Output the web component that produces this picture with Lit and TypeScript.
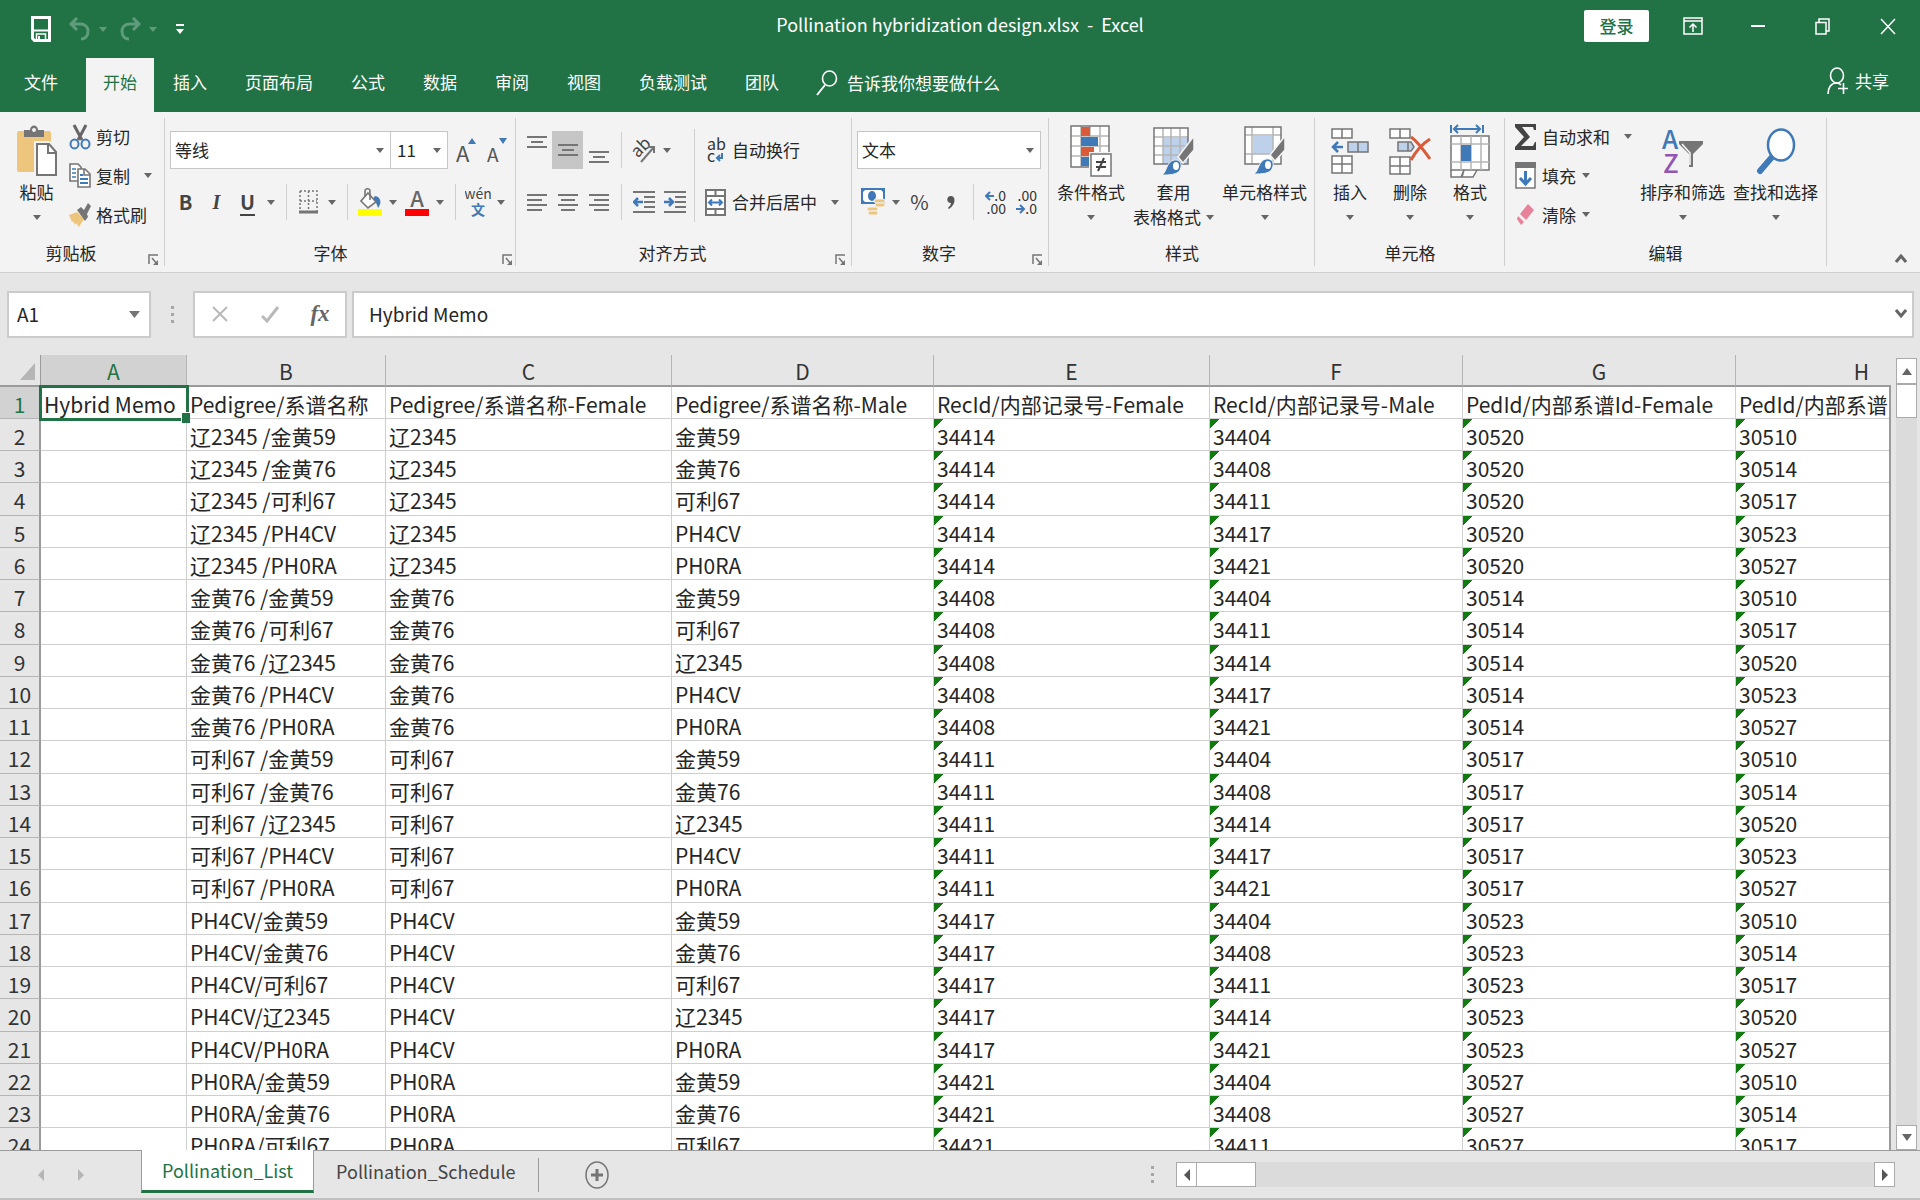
import { LitElement, html, svg, css, TemplateResult } from "lit";
import { customElement, state } from "lit/decorators.js";
import { classMap } from "lit/directives/class-map.js";

interface Line {
  name: string;
  rec: string;
  ped: string;
}

const LINES: Record<string, Line> = {
  h59: { name: "金黄59", rec: "34404", ped: "30510" },
  h76: { name: "金黄76", rec: "34408", ped: "30514" },
  k67: { name: "可利67", rec: "34411", ped: "30517" },
  l2345: { name: "辽2345", rec: "34414", ped: "30520" },
  ph4: { name: "PH4CV", rec: "34417", ped: "30523" },
  ph0: { name: "PH0RA", rec: "34421", ped: "30527" },
};

const CROSSES: [string, string[]][] = [
  ["l2345", ["h59", "h76", "k67", "ph4", "ph0"]],
  ["h76", ["h59", "k67", "l2345", "ph4", "ph0"]],
  ["k67", ["h59", "h76", "l2345", "ph4", "ph0"]],
  ["ph4", ["h59", "h76", "k67", "l2345", "ph0"]],
  ["ph0", ["h59", "h76", "k67"]],
];

const HEADINGS = [
  "Hybrid Memo",
  "Pedigree/系谱名称",
  "Pedigree/系谱名称-Female",
  "Pedigree/系谱名称-Male",
  "RecId/内部记录号-Female",
  "RecId/内部记录号-Male",
  "PedId/内部系谱Id-Female",
  "PedId/内部系谱Id-Male",
];

const ROWS: string[][] = [
  HEADINGS,
  ...CROSSES.flatMap(([f, males]) =>
    males.map((m) => {
      const a = LINES[f];
      const b = LINES[m];
      const gap = a.name.startsWith("PH") ? "" : " ";
      return ["", `${a.name}${gap}/${b.name}`, a.name, b.name, a.rec, b.rec, a.ped, b.ped];
    })
  ),
];

const COLUMNS = ["A", "B", "C", "D", "E", "F", "G", "H"];
const TABS = ["插入", "页面布局", "公式", "数据", "审阅", "视图", "负载测试", "团队"];

const caret = html`<svg class="caret" width="8" height="5" viewBox="0 0 8 5"><path d="M0 0h8L4 5z" fill="currentColor" /></svg>`;

const hlines = (rows: [number, number][], step: number) => html`
  <svg width="20" height=${step * (rows.length - 1) + 2}>
    ${rows.map(([x, len], i) => svg`<rect x=${x} y=${i * step} width=${len} height="2" fill="#757575" />`)}
  </svg>
`;

const icons = {
  save: html`<svg width="20" height="26" viewBox="0 0 20 26" fill="none" stroke="#fff">
    <path d="M1.500 1.500h17v23h-15l-2-2z" stroke-width="3" /><path d="M1.500 14.500h17" stroke-width="2" /><path d="M5.500 24v-6h9v6" stroke-width="1.500" /><path d="M8 20v4" stroke-width="2" />
  </svg>`,
  undo: html`<svg width="22" height="24" viewBox="0 0 22 24" fill="none" stroke="currentColor" stroke-width="3">
    <path d="M8 1L2 7l6 6M2 7h9c5 0 8 3 8 7 0 5-3 8-7 8" />
  </svg>`,
  redo: html`<svg width="22" height="24" viewBox="0 0 22 24" fill="none" stroke="currentColor" stroke-width="3">
    <path d="M14 1l6 6-6 6M20 7h-9c-5 0-8 3-8 7 0 5 3 8 7 8" />
  </svg>`,
  customize: html`<svg width="8" height="11" viewBox="0 0 8 11" fill="#fff"><path d="M0 0h8v2H0zM0 5h8l-4 5z" /></svg>`,
  display: html`<svg width="20" height="18" viewBox="0 0 20 18" fill="none" stroke="#fff" stroke-width="1.500">
    <path d="M1 1h18v16H1zM1 4h18M10 15V7M6.500 10.500L10 7l3.500 3.500" />
  </svg>`,
  minimize: html`<svg width="14" height="2" viewBox="0 0 14 2"><path d="M0 0h14v2H0z" fill="#fff" /></svg>`,
  restore: html`<svg width="15" height="17" viewBox="0 0 15 17" fill="none" stroke="#fff" stroke-width="1.500">
    <path d="M1 4.500h10v11.500H1zM4 4.500V1h10v12h-3" />
  </svg>`,
  close: html`<svg width="16" height="17" viewBox="0 0 16 17" stroke="#fff" stroke-width="1.500"><path d="M1 1l14 15M15 1L1 16" /></svg>`,
  search: html`<svg width="22" height="26" viewBox="0 0 22 26" fill="none" stroke="#fff" stroke-width="1.600">
    <ellipse cx="13.500" cy="8.500" rx="7" ry="7.500" /><path d="M9 15L1 25" stroke-width="2" />
  </svg>`,
  person: html`<svg width="22" height="28" viewBox="0 0 22 28" fill="none" stroke="#fff" stroke-width="1.600">
    <ellipse cx="10" cy="8.500" rx="6.500" ry="7.500" /><path d="M1 27c0-6 3-11 8-11 2 0 4 .5 5 2M16.500 16v11M11 21.500h10" />
  </svg>`,
  paste: html`<svg width="42" height="52" viewBox="0 0 42 52">
    <rect x="1" y="6" width="34" height="41" rx="2" fill="#eec57c" />
    <path d="M8 5h6c0-6 8-6 8 0h6v7H8z" fill="#757575" /><circle cx="18" cy="5" r="2" fill="#f3f3f3" />
    <path d="M20 18h13l8 9v24H20z" fill="#fff" stroke="#f3f3f3" stroke-width="4" />
    <path d="M21 19h12l7 8v23H21z" fill="#fff" stroke="#757575" stroke-width="2" /><path d="M32 19v9h8" fill="none" stroke="#757575" stroke-width="2" />
  </svg>`,
  cut: html`<svg width="22" height="26" viewBox="0 0 22 26" fill="none">
    <path d="M5 1l8 15M17 1L9 16" stroke="#666" stroke-width="3" />
    <ellipse cx="5.500" cy="20" rx="4" ry="4.500" stroke="#3f79b7" stroke-width="2" /><ellipse cx="16.500" cy="20" rx="4" ry="4.500" stroke="#3f79b7" stroke-width="2" />
  </svg>`,
  copy: html`<svg width="22" height="25" viewBox="0 0 22 25" stroke="#757575" stroke-width="1.600">
    <path d="M1 1h8l3 3v14H1z" fill="#fff" /><path d="M3 6h4M3 10h4M3 14h4" stroke="#3f79b7" />
    <path d="M9 6h7l5 5v13H9z" fill="#fff" /><path d="M15 6v6h6" fill="none" /><path d="M11 12h3M11 16h8M11 20h8" stroke="#3f79b7" stroke-width="2" />
  </svg>`,
  brush: html`<svg width="22" height="24" viewBox="0 0 22 24">
    <path d="M0 12l8-3 7 7-5 8-3-4-1 2-2-4-1 1z" fill="#eec57c" /><path d="M8 7l4-3 3 3 4-7 3 3-4 8 1 3-3 4z" fill="#757575" />
  </svg>`,
  grow: html`<svg width="22" height="28" viewBox="0 0 22 28"><text x="0" y="26" font-size="22" fill="#555">A</text><path d="M12 8h8l-4-6z" fill="#3f79b7" /></svg>`,
  shrink: html`<svg width="22" height="28" viewBox="0 0 22 28"><text x="0" y="26" font-size="19" fill="#555">A</text><path d="M12 2h8l-4 6z" fill="#3f79b7" /></svg>`,
  border: html`<svg width="19" height="24" viewBox="0 0 19 24" fill="none" stroke="#757575" stroke-width="1.500">
    <path d="M1 1h17v20M1 1v20M9.500 1v20M1 11h17" stroke-dasharray="2 2" /><path d="M0 22h19" stroke-width="3" />
  </svg>`,
  fill: html`<svg width="24" height="28" viewBox="0 0 24 28">
    <path d="M17 8c6 1 7 7 3 12-1-4-2-6-6-8z" fill="#3f79b7" />
    <path d="M10 5l8 9-8 6-7-7z" fill="#fff" stroke="#757575" stroke-width="1.600" /><path d="M7 8V3c0-3 5-3 5 0v9" fill="none" stroke="#757575" stroke-width="1.600" />
    <path d="M0 21h24v7H0z" fill="#ff0" />
  </svg>`,
  color: html`<svg width="24" height="28" viewBox="0 0 24 28"><text x="12" y="19" font-size="22" font-weight="500" text-anchor="middle" fill="#666">A</text><path d="M0 21h24v7H0z" fill="#f00" /></svg>`,
  wen: html`<svg width="26" height="30" viewBox="0 0 26 30">
    <text x="13" y="12" font-size="14" text-anchor="middle" fill="#444">wén</text><text x="13" y="28" font-size="14" font-weight="700" text-anchor="middle" fill="#3f79b7">文</text>
  </svg>`,
  orient: html`<svg width="26" height="26" viewBox="0 0 26 26">
    <text x="4" y="21" font-size="17" fill="#444" transform="rotate(-45 6 18)">ab</text><path d="M10 25L23 10M17 10h6v6" fill="none" stroke="#757575" stroke-width="2" />
  </svg>`,
  outdent: html`<svg width="22" height="23" viewBox="0 0 22 23"><path d="M0 0h22v2H0zM11 5h11v2H11zM11 10h11v2H11zM11 15h11v2H11zM0 20h22v2H0z" fill="#757575" /><path d="M10 11H2M5 7l-4 4 4 4" stroke="#3f79b7" stroke-width="2.500" fill="none" /></svg>`,
  indent: html`<svg width="22" height="23" viewBox="0 0 22 23"><path d="M0 0h22v2H0zM11 5h11v2H11zM11 10h11v2H11zM11 15h11v2H11zM0 20h22v2H0z" fill="#757575" /><path d="M0 11h8M5 7l4 4-4 4" stroke="#3f79b7" stroke-width="2.500" fill="none" /></svg>`,
  wrap: html`<svg width="20" height="28" viewBox="0 0 20 28"><text x="1" y="14" font-size="16" fill="#333">ab</text><text x="1" y="26" font-size="16" fill="#333">c</text><path d="M16 17v5h-4M14 19l-3 3 3 3" fill="none" stroke="#3f79b7" stroke-width="2" /></svg>`,
  merge: html`<svg width="21" height="27" viewBox="0 0 21 27" fill="#fff" stroke="#757575" stroke-width="2">
    <path d="M1 1h19v25H1zM1 7h19M1 20h19M10.500 1v6M10.500 20v6" /><path d="M4 13.500h13M7 10.500l-3 3 3 3M14 10.500l3 3-3 3" fill="none" stroke="#3f79b7" />
  </svg>`,
  currency: html`<svg width="24" height="29" viewBox="0 0 24 29">
    <rect x="1" y="1" width="22" height="14" fill="#fff" stroke="#3f79b7" stroke-width="2" /><ellipse cx="11" cy="8" rx="4" ry="5" fill="#3f79b7" /><path d="M1 1h4L1 5zM23 1h-4l4 4zM1 15h4l-4-4z" fill="#3f79b7" />
    <g fill="#eec57c" stroke="#f3f3f3"><rect x="13" y="11" width="11" height="4" rx="2" /><rect x="14" y="15" width="10" height="4" rx="2" /><rect x="6" y="19" width="11" height="4" rx="2" /><rect x="7" y="23" width="10" height="4" rx="2" /></g>
  </svg>`,
  comma: html`<svg width="8" height="13" viewBox="0 0 8 13"><path d="M4 0c5 0 5 9-2 13L1 12c2-2 3-4 3-5C-1 7-1 0 4 0z" fill="#555" /></svg>`,
  incDec: html`<svg width="22" height="26" viewBox="0 0 22 26"><text x="21" y="12" font-size="14" text-anchor="end" fill="#333">.0</text><text x="21" y="25" font-size="14" text-anchor="end" fill="#333">.00</text><path d="M9 7H2M5 3L1 7l4 4" fill="none" stroke="#3f79b7" stroke-width="2" /></svg>`,
  decDec: html`<svg width="22" height="26" viewBox="0 0 22 26"><text x="21" y="12" font-size="14" text-anchor="end" fill="#333">.00</text><text x="21" y="25" font-size="14" text-anchor="end" fill="#333">.0</text><path d="M0 20h7M4 16l4 4-4 4" fill="none" stroke="#3f79b7" stroke-width="2" /></svg>`,
  conditional: html`<svg width="42" height="52" viewBox="0 0 42 52">
    <rect x="1" y="1" width="38" height="41" fill="#fff" /><path d="M11 1v41M20 1v41M30 1v41M1 11h38M1 21h38M1 31h38" stroke="#b5b5b5" stroke-width="1.500" />
    <rect x="1" y="1" width="38" height="41" fill="none" stroke="#757575" stroke-width="1.500" />
    <path d="M11 2h9v9h-9zM11 22h13v9H11z" fill="#d95b3a" /><path d="M11 12h17v9H11zM11 32h9v9h-9z" fill="#3f79b7" />
    <rect x="19" y="27" width="24" height="25" fill="#f3f3f3" /><rect x="21" y="29" width="20" height="22" fill="#fff" stroke="#757575" stroke-width="1.500" />
    <path d="M26 37h10M26 42h10M34 33l-6 13" stroke="#444" stroke-width="2" />
  </svg>`,
  tableStyle: html`<svg width="42" height="50" viewBox="0 0 42 50">
    <rect x="1" y="2" width="34" height="36" fill="#fff" /><path d="M10 12h25v26H10z" fill="#bdd2ea" />
    <path d="M10 2v36M18 2v36M27 2v36M1 11h34M1 20h34M1 29h34" stroke="#b5b5b5" stroke-width="1.500" /><rect x="1" y="2" width="34" height="36" fill="none" stroke="#757575" stroke-width="1.500" />
    <path d="M41 10v14L30 37l-5-6z" fill="#757575" stroke="#f3f3f3" stroke-width="1.500" /><path d="M9 49c5-3 4-13 12-15 6-1 9 4 6 10-3 5-11 5-18 5z" fill="#3f79b7" stroke="#f3f3f3" /><ellipse cx="23" cy="40" rx="3" ry="4" fill="#fff" />
  </svg>`,
  cellStyle: html`<svg width="42" height="50" viewBox="0 0 42 50">
    <rect x="1" y="1" width="36" height="37" fill="#fff" /><path d="M9 10h20v18H9z" fill="#bdd2ea" />
    <path d="M8 1v37M29 1v37M1 9h36M1 28h36" stroke="#b5b5b5" stroke-width="1.500" /><rect x="1" y="1" width="36" height="37" fill="none" stroke="#757575" stroke-width="1.500" />
    <path d="M41 10v14L31 35l-5-6z" fill="#757575" stroke="#f3f3f3" stroke-width="1.500" /><path d="M10 48c5-3 4-13 12-15 6-1 9 4 6 10-3 5-11 5-18 5z" fill="#3f79b7" stroke="#f3f3f3" /><ellipse cx="24" cy="39" rx="3" ry="4" fill="#fff" />
  </svg>`,
  insert: html`<svg width="38" height="50" viewBox="0 0 38 50" fill="#fff" stroke="#757575" stroke-width="1.500">
    <path d="M1 3h20v9H1zM11 3v9M1 30h20v17H1zM11 30v17M1 38h20" /><path d="M17 16h20v10H17zM27 16v10" fill="#bdd2ea" /><path d="M12 21H3M7 16l-5 5 5 5" fill="none" stroke="#3f79b7" stroke-width="2.500" />
  </svg>`,
  remove: html`<svg width="42" height="50" viewBox="0 0 42 50" fill="#fff" stroke="#757575" stroke-width="1.500">
    <path d="M1 3h20v9H1zM11 3v9M1 31h20v17H1zM11 31v17M1 40h20" /><path d="M9 16h13l3 5-3 4H9zM19 16v9" fill="#bdd2ea" /><path d="M22 11c6 4 12 12 19 22M41 13C33 18 27 25 22 34" fill="none" stroke="#d95b3a" stroke-width="3" />
  </svg>`,
  format: html`<svg width="40" height="54" viewBox="0 0 40 54" fill="#fff" stroke="#757575" stroke-width="1.500">
    <path d="M1 1v8M33 1v8M4 5h26M8 1L4 5l4 4M26 1l4 4-4 4" fill="none" stroke="#3f79b7" stroke-width="2" />
    <path d="M1 46v7h10l3-7M14 46l-2 7h11l4-7" /><rect x="1" y="12" width="38" height="34" />
    <path d="M11 12v34M21 12v34M31 12v34M1 20h38M1 38h38" stroke="#b5b5b5" /><rect x="11" y="21" width="10" height="16" fill="#3f79b7" stroke="none" />
  </svg>`,
  sum: html`<svg width="21" height="26" viewBox="0 0 21 26"><path d="M0 0h21v6h-2l-1-3H7l8 10-9 9h12l2-4h1v8H0v-3l9-10L0 3z" fill="#444" /></svg>`,
  down: html`<svg width="21" height="27" viewBox="0 0 21 27"><path d="M1 1h19v25H1z" fill="#fff" stroke="#757575" stroke-width="1.500" /><path d="M0 0h21v6H0z" fill="#757575" /><path d="M10.500 9v13M5 16l5.500 6 5.500-6" fill="none" stroke="#3f79b7" stroke-width="3" /></svg>`,
  clear: html`<svg width="21" height="22" viewBox="0 0 21 22"><path d="M13 0l6 6-8 10-6-6z" fill="#e8829a" /><path d="M3 12l6 6-3 3-4-6z" fill="#e8829a" /></svg>`,
  sort: html`<svg width="42" height="48" viewBox="0 0 42 48">
    <text x="8" y="22" font-size="26" font-weight="500" text-anchor="middle" fill="#3f79b7">A</text><text x="9" y="46" font-size="26" font-weight="500" text-anchor="middle" fill="#9156b4">Z</text>
    <path d="M17 14h24v3L31 27v13h-4V27L17 17z" fill="#757575" /><path d="M20 17l8 9v12" fill="none" stroke="#fff" stroke-width="1.500" />
  </svg>`,
  find: html`<svg width="40" height="48" viewBox="0 0 40 48"><path d="M16 30L4 44" stroke="#3f79b7" stroke-width="6" stroke-linecap="round" /><ellipse cx="25" cy="18" rx="13" ry="15.500" fill="#fff" stroke="#3f79b7" stroke-width="2.500" /></svg>`,
  launcher: html`<svg width="11" height="12" viewBox="0 0 11 12" fill="none" stroke="#757575" stroke-width="1.500"><path d="M1 10V1h9M4 4l5 6" /><path d="M10 6v5H5z" fill="#757575" stroke="none" /></svg>`,
  collapse: html`<svg width="12" height="10" viewBox="0 0 12 10" fill="none" stroke="#666" stroke-width="3"><path d="M1 9l5-6 5 6" /></svg>`,
  expand: html`<svg width="12" height="10" viewBox="0 0 12 10" fill="none" stroke="#666" stroke-width="3"><path d="M1 1l5 6 5-6" /></svg>`,
  cancel: html`<svg width="16" height="16" viewBox="0 0 16 16" stroke="#b9b9b9" stroke-width="2"><path d="M1 1l14 14M15 1L1 15" /></svg>`,
  accept: html`<svg width="18" height="17" viewBox="0 0 18 17" fill="none" stroke="#b9b9b9" stroke-width="3"><path d="M1 10l5 5L17 1" /></svg>`,
  dots: html`<svg width="3" height="17" viewBox="0 0 3 17" fill="#a6a6a6"><path d="M0 0h3v3H0zM0 7h3v3H0zM0 14h3v3H0z" /></svg>`,
  left: html`<svg width="6" height="12" viewBox="0 0 6 12"><path d="M6 0v12L0 6z" fill="currentColor" /></svg>`,
  right: html`<svg width="6" height="12" viewBox="0 0 6 12"><path d="M0 0v12l6-6z" fill="currentColor" /></svg>`,
  up: html`<svg width="10" height="7" viewBox="0 0 10 7"><path d="M0 7h10L5 0z" fill="currentColor" /></svg>`,
  lower: html`<svg width="10" height="7" viewBox="0 0 10 7"><path d="M0 0h10L5 7z" fill="currentColor" /></svg>`,
  add: html`<svg width="24" height="28" viewBox="0 0 24 28" fill="none" stroke="#757575"><ellipse cx="12" cy="14" rx="11" ry="13" stroke-width="1.500" /><path d="M12 8v12M6 14h12" stroke-width="3" /></svg>`,
};

@customElement("app-root")
export class AppRoot extends LitElement {
  @state() private sheet = 0;

  static styles = css`
    :host {
      display: grid;
      grid-template-columns: minmax(0, 1fr);
      grid-template-rows: auto auto auto auto minmax(0, 1fr) auto;
      height: 100vh;
      overflow: hidden;
      background: #e6e6e6;
      color: #262626;
      font-family: "Noto Sans CJK SC", sans-serif;
      font-size: 17px;
      line-height: 24px;
    }
    * {
      box-sizing: border-box;
    }
    button,
    input,
    select {
      font: inherit;
      color: inherit;
      margin: 0;
      padding: 0;
      border: 0;
      border-radius: 0;
      background: none;
    }
    button {
      display: flex;
      align-items: center;
      justify-content: center;
      white-space: nowrap;
    }
    svg {
      display: block;
      flex: none;
    }
    .caret {
      color: #666;
    }

    .title {
      display: grid;
      grid-template-columns: 1fr auto 1fr;
      height: 52px;
      background: #217346;
      color: #fff;
    }
    .quick {
      display: flex;
      gap: 5px;
      padding: 6px 0 0 22px;
    }
    .quick button {
      width: 30px;
    }
    .quick .save {
      width: 38px;
    }
    .quick .pair {
      display: flex;
      color: #5f9c7c;
    }
    .quick .pair .caret {
      color: #5f9c7c;
    }
    .quick .more {
      width: 15px;
      height: auto;
    }
    .name {
      margin: 0;
      font-size: 18px;
      font-weight: 400;
      line-height: 48px;
      white-space: pre;
    }
    .window {
      display: flex;
      justify-content: flex-end;
      align-items: center;
    }
    .window button {
      width: 65px;
      height: 52px;
    }
    .window .login {
      height: 32px;
      margin-right: 11px;
      background: #fff;
      color: #217346;
      border-radius: 2px;
      font-weight: 500;
    }

    .tabs {
      display: flex;
      height: 60px;
      padding-top: 6px;
      background: #217346;
      color: #fff;
    }
    .tabs button {
      padding: 0 19px 6px;
    }
    .tabs .file {
      padding: 0 28px 6px 24px;
    }
    .tabs .active {
      padding: 0 17px 6px;
      background: #f3f3f3;
      color: #217346;
    }
    .tabs .tell {
      gap: 9px;
      padding: 0 19px 4px 18px;
    }
    .tabs .share {
      gap: 6px;
      margin-left: auto;
      padding: 0 31px 8px;
    }

    .ribbon {
      display: flex;
      height: 161px;
      background: #f3f3f3;
      border-bottom: 1px solid #cfcfcf;
    }
    .group {
      display: grid;
      grid-template-rows: 124px 34px;
      border-right: 1px solid #cfcfcf;
      border-image: linear-gradient(transparent 7px, #cfcfcf 7px, #cfcfcf calc(100% - 7px), transparent calc(100% - 7px)) 1;
    }
    .clipboard {
      width: 165px;
    }
    .font {
      width: 351px;
    }
    .align {
      width: 336px;
    }
    .number {
      width: 197px;
    }
    .styles {
      width: 266px;
    }
    .cells {
      width: 190px;
    }
    .editing {
      width: 322px;
    }
    .body {
      display: flex;
      padding: 0 5px;
    }
    .clipboard .body {
      padding-left: 7px;
    }
    .label {
      display: flex;
      align-items: center;
    }
    .label span {
      flex: 1;
      text-align: center;
    }
    .label button {
      width: 22px;
      height: 34px;
      padding-top: 13px;
    }
    .stack {
      display: flex;
      flex-direction: column;
      padding-top: 5px;
    }
    .stack button {
      height: 39px;
      gap: 6px;
      justify-content: flex-start;
    }
    .stack .wide .caret {
      margin-left: 8px;
    }
    .stack .icon {
      display: flex;
      justify-content: center;
      width: 21px;
    }
    .editing .stack {
      width: 125px;
      padding-left: 5px;
    }
    .big {
      display: flex;
      flex-direction: column;
      justify-content: flex-start;
      align-items: center;
      padding: 11px 3px 0;
    }
    .big .art {
      display: flex;
      align-items: center;
      height: 56px;
    }
    .big .text {
      line-height: 26px;
    }
    .big .foot {
      display: flex;
      align-items: center;
      gap: 5px;
      height: 24px;
    }
    .clipboard .big {
      width: 62px;
      padding-left: 0;
    }
    .cells .big {
      width: 60px;
    }
    .styles .body,
    .editing .body {
      gap: 2px;
    }

    .lines {
      display: flex;
      flex-direction: column;
      padding-top: 12px;
    }
    .line {
      display: flex;
      align-items: center;
      height: 52px;
    }
    .tool {
      width: 31px;
      height: 38px;
      font-size: 20px;
      color: #444;
    }
    .tool.on {
      background: #c6c6c6;
    }
    .tool.top {
      align-items: flex-start;
      padding-top: 5px;
    }
    .tool.bottom {
      align-items: flex-end;
      padding-bottom: 6px;
    }
    .bold {
      font-weight: 700;
    }
    .italic {
      font-family: "Liberation Serif", serif;
      font-style: italic;
      font-weight: 700;
    }
    .underline {
      font-weight: 700;
      text-decoration: underline;
      text-underline-offset: 4px;
    }
    .more {
      width: 16px;
      height: 38px;
    }
    .rule {
      width: 1px;
      height: 36px;
      margin: 0 6px 0 7px;
      background: #cfcfcf;
    }
    .rule.long {
      height: 93px;
      margin: 17px 10px 0 4px;
    }
    .command {
      gap: 6px;
      height: 38px;
    }
    .command .icon {
      display: flex;
      justify-content: center;
      width: 21px;
    }
    .command .caret {
      margin-left: 8px;
    }
    .combo {
      display: flex;
      align-items: center;
      position: relative;
      height: 38px;
      background: #fff;
      border: 1px solid #c6c6c6;
    }
    .combo + .combo {
      border-left: 0;
    }
    .combo select {
      width: 100%;
      height: 36px;
      padding-left: 4px;
      appearance: none;
    }
    .combo .caret {
      position: absolute;
      right: 6px;
      pointer-events: none;
    }
    .family {
      width: 221px;
    }
    .size {
      width: 57px;
      margin-right: 3px;
    }
    .size select {
      padding-left: 6px;
    }
    .kind {
      width: 184px;
    }
    .collapse {
      margin: auto 7px 2px auto;
      width: 24px;
      height: 24px;
    }

    .formula {
      display: flex;
      align-items: center;
      height: 82px;
      padding: 0 6px 0 7px;
    }
    .box {
      display: flex;
      align-items: center;
      height: 47px;
      background: #fff;
      border: 2px solid #cbcbcb;
    }
    .box input {
      flex: 1;
      min-width: 0;
      height: 43px;
      font-size: 19px;
      padding-bottom: 2px;
      outline: 0;
    }
    .where {
      width: 144px;
      padding: 0 9px 0 8px;
    }
    .grip {
      display: flex;
      justify-content: center;
      width: 42px;
    }
    .actions {
      width: 154px;
      margin-right: 5px;
    }
    .actions button {
      flex: 1;
      height: 43px;
    }
    .fx {
      font-family: "Liberation Serif", serif;
      font-size: 23px;
      font-style: italic;
      font-weight: 700;
      color: #666;
    }
    .value {
      flex: 1;
      padding: 0 4px 0 15px;
    }
    .value button {
      width: 14px;
      height: 43px;
    }

    .area {
      display: flex;
      min-height: 0;
      border-bottom: 1px solid #9b9b9b;
    }
    .view {
      flex: 1;
      min-width: 0;
      overflow: hidden;
      position: relative;
    }
    .view::after {
      content: "";
      position: absolute;
      top: 30px;
      right: 0;
      bottom: 0;
      width: 2px;
      background: #9b9b9b;
    }
    table {
      width: 1988px;
      table-layout: fixed;
      border-collapse: separate;
      border-spacing: 0;
      font-size: 21px;
      line-height: 28px;
    }
    th,
    td {
      padding: 2px 0 0;
      font-weight: 400;
      white-space: nowrap;
      overflow: hidden;
    }
    .c-row {
      width: 41px;
    }
    .c-A {
      width: 146px;
    }
    .c-B {
      width: 199px;
    }
    .c-C {
      width: 286px;
    }
    .c-D {
      width: 262px;
    }
    .c-E {
      width: 276px;
    }
    .c-F {
      width: 253px;
    }
    .c-G {
      width: 273px;
    }
    .c-H {
      width: 252px;
    }
    thead th {
      height: 32px;
      border-right: 1px solid #b5b5b5;
      border-bottom: 2px solid #9b9b9b;
      color: #333;
    }
    thead th.current {
      background: #d2d2d2;
      color: #217346;
    }
    thead .corner {
      border-right-color: #9b9b9b;
    }
    .corner svg {
      margin: 0 5px 0 auto;
    }
    tbody th {
      height: 32px;
      background: #e6e6e6;
      border-right: 2px solid #9b9b9b;
      border-bottom: 1px solid #b5b5b5;
      color: #333;
    }
    tbody th.current {
      background: #d2d2d2;
      color: #217346;
    }
    td {
      height: 32px;
      padding-left: 3px;
      background-color: #fff;
      border-right: 1px solid #cfcfcf;
      border-bottom: 1px solid #cfcfcf;
    }
    tr:nth-child(4n) > td,
    tr:nth-child(4n) > th {
      height: 33px;
    }
    td.flag {
      background-image: linear-gradient(to bottom right, #107c10 50%, transparent 50%);
      background-repeat: no-repeat;
      background-size: 9px 10px;
    }
    td.selected {
      position: relative;
      overflow: visible;
      outline: 3px solid #217346;
      outline-offset: -1px;
    }
    td.selected::after {
      content: "";
      position: absolute;
      right: -4px;
      bottom: -5px;
      width: 8px;
      height: 10px;
      background: #217346;
      border: 1px solid #fff;
      border-width: 1px 0 0 1px;
    }

    .vscroll {
      display: flex;
      flex-direction: column;
      width: 21px;
      margin: 3px 3px 0 5px;
      background: #dbdbdb;
      color: #666;
    }
    .vscroll button,
    .vscroll .thumb {
      height: 26px;
      background: #fff;
      border: 1px solid #ababab;
    }
    .vscroll .thumb {
      height: 34px;
    }
    .vscroll .last {
      height: 25px;
      margin-top: auto;
    }

    .sheets {
      display: flex;
      height: 49px;
      border-bottom: 2px solid #c0c0c0;
      font-size: 18px;
    }
    .nav {
      display: flex;
      width: 141px;
      padding-left: 21px;
      color: #b5b5b5;
    }
    .nav button {
      width: 40px;
    }
    .sheets .sheet {
      height: 42px;
      padding: 0 22px;
      color: #444;
      border-bottom: 3px solid transparent;
    }
    .sheets .sheet.open {
      margin-top: -1px;
      height: 43px;
      padding: 0 20px;
      background: #fff;
      color: #217346;
      border: 1px solid #9b9b9b;
      border-top: 0;
      border-bottom: 3px solid #217346;
    }
    .divider {
      width: 1px;
      height: 34px;
      margin-top: 7px;
      background: #9b9b9b;
    }
    .add {
      width: 40px;
      margin-left: 38px;
    }
    .hscroll {
      display: flex;
      align-items: center;
      width: 744px;
      margin: 0 25px 0 auto;
      color: #555;
    }
    .hscroll .grip {
      width: 3px;
      margin-right: 22px;
    }
    .hscroll .track {
      display: flex;
      flex: 1;
      background: #dbdbdb;
    }
    .hscroll button,
    .hscroll .thumb {
      width: 21px;
      height: 25px;
      background: #fff;
      border: 1px solid #ababab;
    }
    .hscroll .thumb {
      width: 59px;
      border-left: 0;
    }
    .hscroll .last {
      margin-left: auto;
    }
  `;

  private big(label: string, art: TemplateResult, second = "") {
    return html`<button class="big">
      <span class="art">${art}</span>
      <span class="text">${label}</span>
      <span class="foot">${second}${caret}</span>
    </button>`;
  }

  private tool(label: string, content: unknown, extra = "") {
    return html`<button class="tool ${extra}" aria-label=${label}>${content}</button>`;
  }

  private more(label: string) {
    return html`<button class="more" aria-label=${label}>${caret}</button>`;
  }

  private label(text: string, launcher = true) {
    return html`<div class="label">
      <span>${text}</span>${launcher ? html`<button aria-label="${text}设置">${icons.launcher}</button>` : ""}
    </div>`;
  }

  private ribbon() {
    const rule = html`<i class="rule"></i>`;
    return html`<section class="ribbon" aria-label="开始">
      <div class="group clipboard">
        <div class="body">
          ${this.big("粘贴", icons.paste)}
          <div class="stack">
            <button><span class="icon">${icons.cut}</span>剪切</button>
            <button class="wide"><span class="icon">${icons.copy}</span>复制${caret}</button>
            <button><span class="icon">${icons.brush}</span>格式刷</button>
          </div>
        </div>
        ${this.label("剪贴板")}
      </div>
      <div class="group font">
        <div class="body">
          <div class="lines">
            <div class="line">
              <span class="combo family"><select aria-label="字体"><option>等线</option></select>${caret}</span>
              <span class="combo size"><select aria-label="字号"><option>11</option></select>${caret}</span>
              ${this.tool("增大字号", icons.grow)}${this.tool("减小字号", icons.shrink)}
            </div>
            <div class="line">
              ${this.tool("加粗", "B", "bold")}${this.tool("倾斜", "I", "italic")}${this.tool("下划线", "U", "underline")}${this.more("下划线选项")}${rule}
              ${this.tool("边框", icons.border)}${this.more("边框选项")}${rule}
              ${this.tool("填充颜色", icons.fill)}${this.more("填充颜色选项")}${this.tool("字体颜色", icons.color)}${this.more("字体颜色选项")}${rule}
              ${this.tool("拼音", icons.wen)}${this.more("拼音选项")}
            </div>
          </div>
        </div>
        ${this.label("字体")}
      </div>
      <div class="group align">
        <div class="body">
          <div class="lines">
            <div class="line">
              ${this.tool("顶端对齐", hlines([[0, 20], [4, 12], [0, 20]], 5), "top")}
              ${this.tool("垂直居中", hlines([[0, 20], [4, 12], [0, 20]], 5), "on")}
              ${this.tool("底端对齐", hlines([[0, 20], [4, 12], [0, 20]], 5), "bottom")}${rule}
              ${this.tool("方向", icons.orient)}${this.more("方向选项")}
            </div>
            <div class="line">
              ${this.tool("左对齐", hlines([[0, 20], [0, 15], [0, 20], [0, 15]], 5))}
              ${this.tool("居中", hlines([[0, 20], [3, 14], [0, 20], [3, 14]], 5))}
              ${this.tool("右对齐", hlines([[0, 20], [5, 15], [0, 20], [5, 15]], 5))}${rule}
              ${this.tool("减少缩进量", icons.outdent)}${this.tool("增加缩进量", icons.indent)}
            </div>
          </div>
          <i class="rule long"></i>
          <div class="lines">
            <div class="line"><button class="command"><span class="icon">${icons.wrap}</span>自动换行</button></div>
            <div class="line"><button class="command"><span class="icon">${icons.merge}</span>合并后居中${caret}</button></div>
          </div>
        </div>
        ${this.label("对齐方式")}
      </div>
      <div class="group number">
        <div class="body">
          <div class="lines">
            <div class="line"><span class="combo kind"><select aria-label="数字格式"><option>文本</option></select>${caret}</span></div>
            <div class="line">
              ${this.tool("会计数字格式", icons.currency)}${this.more("会计数字格式选项")}${this.tool("百分比样式", "%")}${this.tool("千位分隔样式", icons.comma)}${rule}
              ${this.tool("增加小数位数", icons.incDec)}${this.tool("减少小数位数", icons.decDec)}
            </div>
          </div>
        </div>
        ${this.label("数字")}
      </div>
      <div class="group styles">
        <div class="body">
          ${this.big("条件格式", icons.conditional)}${this.big("套用", icons.tableStyle, "表格格式")}${this.big("单元格样式", icons.cellStyle)}
        </div>
        ${this.label("样式", false)}
      </div>
      <div class="group cells">
        <div class="body">${this.big("插入", icons.insert)}${this.big("删除", icons.remove)}${this.big("格式", icons.format)}</div>
        ${this.label("单元格", false)}
      </div>
      <div class="group editing">
        <div class="body">
          <div class="stack">
            <button class="wide"><span class="icon">${icons.sum}</span>自动求和${caret}</button>
            <button><span class="icon">${icons.down}</span>填充${caret}</button>
            <button><span class="icon">${icons.clear}</span>清除${caret}</button>
          </div>
          ${this.big("排序和筛选", icons.sort)}${this.big("查找和选择", icons.find)}
        </div>
        ${this.label("编辑", false)}
      </div>
      <button class="collapse" aria-label="折叠功能区">${icons.collapse}</button>
    </section>`;
  }

  private grid() {
    return html`<table>
      <colgroup>
        <col class="c-row" />
        ${COLUMNS.map((c) => html`<col class="c-${c}" />`)}
      </colgroup>
      <thead>
        <tr>
          <th class="corner"><svg width="15" height="17" viewBox="0 0 15 17"><path d="M15 0v17H0z" fill="#b5b5b5" /></svg></th>
          ${COLUMNS.map((c, i) => html`<th scope="col" class=${classMap({ current: i === 0 })}>${c}</th>`)}
        </tr>
      </thead>
      <tbody>
        ${ROWS.map(
          (row, r) => html`<tr>
            <th scope="row" class=${classMap({ current: r === 0 })}>${r + 1}</th>
            ${row.map((v, c) => html`<td class=${classMap({ flag: r > 0 && c > 3, selected: r === 0 && c === 0 })}>${v}</td>`)}
          </tr>`
        )}
      </tbody>
    </table>`;
  }

  render() {
    return html`
      <header class="title">
        <div class="quick">
          <button class="save" aria-label="保存">${icons.save}</button>
          <span class="pair"><button aria-label="撤消">${icons.undo}</button><button class="more" aria-label="撤消选项">${caret}</button></span>
          <span class="pair"><button aria-label="恢复">${icons.redo}</button><button class="more" aria-label="恢复选项">${caret}</button></span>
          <button aria-label="自定义快速访问工具栏">${icons.customize}</button>
        </div>
        <h1 class="name">Pollination hybridization design.xlsx  -  Excel</h1>
        <div class="window">
          <button class="login">登录</button>
          <button aria-label="功能区显示选项">${icons.display}</button>
          <button aria-label="最小化">${icons.minimize}</button>
          <button aria-label="还原">${icons.restore}</button>
          <button aria-label="关闭">${icons.close}</button>
        </div>
      </header>
      <nav class="tabs">
        <button class="file">文件</button>
        <button class="active">开始</button>
        ${TABS.map((t) => html`<button>${t}</button>`)}
        <button class="tell">${icons.search}告诉我你想要做什么</button>
        <button class="share">${icons.person}共享</button>
      </nav>
      ${this.ribbon()}
      <div class="formula">
        <div class="box where"><input aria-label="名称框" value="A1" /><svg width="11" height="7" viewBox="0 0 11 7"><path d="M0 0h11L5.500 7z" fill="#757575" /></svg></div>
        <span class="grip">${icons.dots}</span>
        <div class="box actions">
          <button aria-label="取消">${icons.cancel}</button>
          <button aria-label="输入">${icons.accept}</button>
          <button class="fx" aria-label="插入函数">fx</button>
        </div>
        <div class="box value"><input aria-label="编辑栏" value="Hybrid Memo" /><button aria-label="展开编辑栏">${icons.expand}</button></div>
      </div>
      <main class="area">
        <div class="view">${this.grid()}</div>
        <div class="vscroll">
          <button aria-label="向上滚动">${icons.up}</button>
          <span class="thumb"></span>
          <button class="last" aria-label="向下滚动">${icons.lower}</button>
        </div>
      </main>
      <footer class="sheets">
        <div class="nav"><button aria-label="上一个工作表">${icons.left}</button><button aria-label="下一个工作表">${icons.right}</button></div>
        ${["Pollination_List", "Pollination_Schedule"].map(
          (n, i) => html`<button class=${classMap({ sheet: true, open: i === this.sheet })} @click=${() => (this.sheet = i)}>${n}</button>`
        )}
        <i class="divider"></i>
        <button class="add" aria-label="新工作表">${icons.add}</button>
        <div class="hscroll">
          <span class="grip">${icons.dots}</span>
          <div class="track">
            <button aria-label="向左滚动">${icons.left}</button>
            <span class="thumb"></span>
            <button class="last" aria-label="向右滚动">${icons.right}</button>
          </div>
        </div>
      </footer>
    `;
  }
}
